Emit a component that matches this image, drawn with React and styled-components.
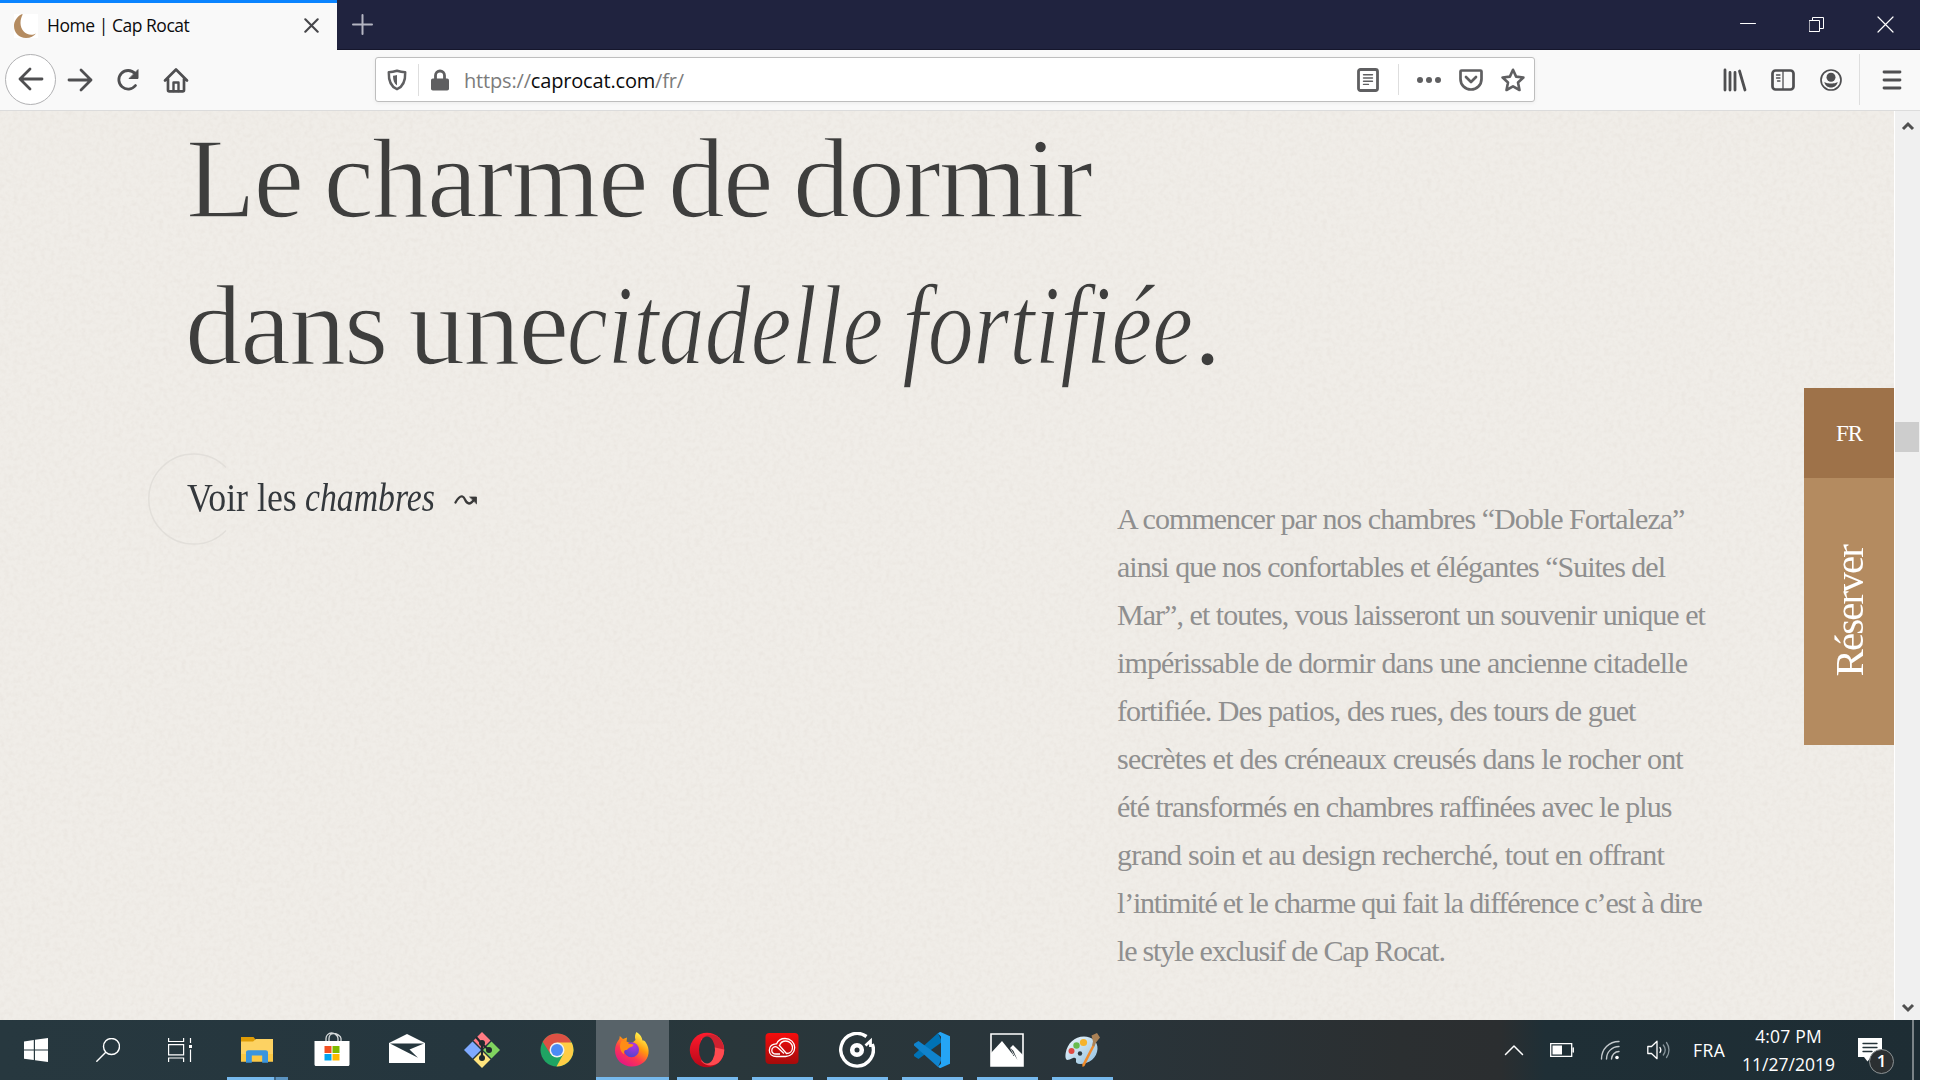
import React, { useLayoutEffect, useRef, useState } from "react";
import styled, { createGlobalStyle } from "styled-components";

const Global = createGlobalStyle`
  *, *::before, *::after { box-sizing: border-box; }
  html, body { margin: 0; padding: 0; background: #fff; }
  h1, p { margin: 0; font-weight: 400; }
  svg { display: block; flex: none; }
`;

const serif = `"Liberation Serif", serif`;
const sans = `"Open Sans", "Noto Sans", sans-serif`;

/* ---------- text set to an exact measure ---------- */

const FitBox = styled.span`
  display: inline-block;
  white-space: pre;
  transform-origin: 0 50%;
  font-variant-ligatures: none;
`;

function Fit({ width, condense, children, ...rest }) {
  const ref = useRef(null);
  const [style, setStyle] = useState({});
  useLayoutEffect(() => {
    const natural = ref.current.offsetWidth;
    const letters = ref.current.textContent.length;
    setStyle(
      condense
        ? { width, transform: `scaleX(${width / natural})` }
        : { letterSpacing: `${(width - natural) / (letters - 1)}px` }
    );
  }, [width, condense]);
  return (
    <FitBox ref={ref} style={style} {...rest}>
      {children}
    </FitBox>
  );
}

/* ---------- window ---------- */

const Screen = styled.div`
  width: 1920px;
  height: 1080px;
  display: flex;
  flex-direction: column;
  overflow: hidden;
  background: #eeebe6;
`;

const TabBar = styled.header`
  display: flex;
  height: 50px;
  flex: none;
  background: #20233f;
  box-shadow: inset 0 -1px 0 #15162c;
`;

const Tab = styled.div`
  display: flex;
  align-items: center;
  width: 337px;
  padding: 0 18px 2px 14px;
  border-top: 3px solid #0a84ff;
  background: #f9f9f9;
`;

const TabTitle = styled.div`
  flex: 1;
  margin: -1px 0 0 9px;
  font: 17.5px/24px ${sans};
  color: #0c0c0d;
`;

const NewTab = styled.div`
  display: flex;
  align-items: center;
  padding: 0 0 2px 15px;
  flex: 1;
`;

const WindowControls = styled.div`
  display: flex;
  align-items: center;
  padding-bottom: 2px;
`;

const WindowButton = styled.div`
  display: flex;
  justify-content: center;
  width: 69px;
`;

const Toolbar = styled.nav`
  display: flex;
  align-items: center;
  height: 61px;
  flex: none;
  padding: 0 4px 2px 5px;
  background: #f9f9f9;
  border-bottom: 1px solid #dcdcdc;
`;

const NavGroup = styled.div`
  display: flex;
  align-items: center;
  width: 370px;
`;

const NavButton = styled.div`
  display: flex;
  align-items: center;
  justify-content: center;
  width: ${(p) => p.$w || 48}px;
  height: 51px;
  padding-top: 1px;
`;

const BackButton = styled(NavButton)`
  padding-top: 0;
  border: 1px solid #b1b1b3;
  border-radius: 50%;
  background: #fff;
`;

const UrlBar = styled.div`
  display: flex;
  align-items: center;
  width: 1160px;
  height: 45px;
  padding: 1px 0 0 11px;
  background: #fff;
  border: 1px solid #bebebe;
  border-radius: 3px;
  box-shadow: 0 1px 4px rgba(0, 0, 0, 0.06);
`;

const Rule = styled.i`
  width: 1px;
  height: ${(p) => p.$h}px;
  margin: ${(p) => p.$m};
  background: #dedede;
`;

const Url = styled.div`
  flex: 1;
  margin-left: 15px;
  padding-top: 2px;
  font: 20px/30px ${sans};
  color: #7c7c7c;
  b {
    font-weight: 400;
    color: #0c0c0d;
  }
`;

const UrlAction = styled.div`
  display: flex;
  justify-content: center;
  width: 42px;
  padding-top: 1px;
`;

const RightGroup = styled.div`
  display: flex;
  align-items: center;
  margin-left: auto;
`;

/* ---------- page ---------- */

const Viewport = styled.div`
  display: flex;
  flex: 1;
  min-height: 0;
`;

const Page = styled.main`
  position: relative;
  z-index: 0;
  display: flex;
  justify-content: space-between;
  flex: 1;
  overflow: hidden;
  background: #eeebe6;
  font-family: ${serif};
`;

const Paper = styled.svg`
  position: absolute;
  inset: 0;
  z-index: -1;
`;

const Article = styled.section`
  display: grid;
  grid-template-columns: 928px 600px;
  grid-template-rows: 294px auto;
  align-content: start;
  margin: -6px 0 0 189px;
`;

const Heading = styled.h1`
  grid-column: 1 / 3;
  font-size: 114px;
  line-height: 147px;
  word-spacing: -5px;
  color: #3e3e3d;
  -webkit-text-stroke: 1.6px #eeebe6;
`;

const HeadingLine = styled.div`
  display: flex;
  margin-left: ${(p) => p.$shift || 0}px;
`;

const RoomsLink = styled.a`
  position: relative;
  display: flex;
  align-items: center;
  height: 92px;
  margin-top: 52px;
  font-size: 41px;
  line-height: 92px;
  color: #34383c;
`;

const Ring = styled.svg`
  position: absolute;
  left: -41px;
  top: 2px;
  z-index: -1;
`;

const Word = styled.span`
  display: block;
  margin-left: ${(p) => p.$gap}px;
  font-style: ${(p) => (p.$italic ? "italic" : "normal")};
`;

const Arrow = styled.span`
  margin: 5px 0 0 19px;
`;

const Body = styled.p`
  margin-top: 96px;
  font-size: 30px;
  line-height: 48px;
  color: #8f8f8f;
`;

const BodyLine = styled.span`
  display: block;
  height: 48px;
`;

const Side = styled.aside`
  width: 90px;
  margin-top: 277px;
  color: #fff;
`;

const Language = styled.div`
  display: flex;
  align-items: center;
  justify-content: center;
  height: 90px;
  padding-top: 2px;
  background: #9e7249;
  font-size: 23px;
  line-height: 30px;
`;

const Book = styled.div`
  display: flex;
  align-items: center;
  justify-content: center;
  height: 267px;
  background: #b48b60;
  font-size: 41px;
  line-height: 60px;
  span {
    writing-mode: vertical-rl;
    transform: rotate(180deg);
    letter-spacing: -1.9px;
  }
`;

const Scrollbar = styled.div`
  display: flex;
  flex-direction: column;
  align-items: center;
  width: 26px;
  padding: 9px 0 6px;
  background: #f0f0f0;
  border-left: 1px solid #fff;
`;

const Thumb = styled.div`
  width: 24px;
  height: 30px;
  margin: 291px 1px auto 0;
  background: #cdcdcd;
`;

/* ---------- taskbar ---------- */

const Taskbar = styled.footer`
  display: flex;
  height: 60px;
  flex: none;
  background: linear-gradient(90deg, #27383f 0, #25363e 480px, #29373b 720px, #29343a 1100px, #2b2f31 1400px, #2b2e30 1500px, #1f2f36 1545px, #1e2d34 1920px);
  font-family: ${sans};
  color: #fff;
`;

const SystemButton = styled.div`
  display: flex;
  align-items: center;
  justify-content: center;
  width: 72px;
`;

const Apps = styled.div`
  display: flex;
  margin-left: 4px;
`;

const AppSlot = styled.div`
  display: flex;
  flex-direction: column;
  align-items: center;
  width: ${(p) => (p.$active ? 73 : 75)}px;
  margin: 0 ${(p) => (p.$active ? 1 : 0)}px;
  background: ${(p) => (p.$active ? "#586369" : "transparent")};
  svg {
    margin: 12px 2px 9px 0;
  }
`;

const Running = styled.i`
  width: ${(p) => (p.$active ? 73 : 61)}px;
  height: 3px;
  background: ${(p) =>
    p.$stacked ? "linear-gradient(90deg, #76b9ed 47px, #3e6585 47px, #3e6585 49px, #5b93c0 49px)" : "#76b9ed"};
`;

const Tray = styled.div`
  display: flex;
  align-items: center;
  margin-left: auto;
  padding-right: 6px;
`;

const TrayItem = styled.div`
  display: flex;
  justify-content: center;
  width: 48px;
`;

const Keyboard = styled.div`
  margin: 0 19px 0 11px;
  width: 31px;
  font-size: 17.5px;
  line-height: 24px;
`;

const Clock = styled.div`
  display: flex;
  flex-direction: column;
  align-items: center;
  width: 91px;
  font-size: 17.5px;
  line-height: 28px;
`;

const Notice = styled.div`
  position: relative;
  margin: 0 30px 1px 24px;
`;

const Badge = styled.div`
  position: absolute;
  left: 11px;
  top: 11px;
  width: 25px;
  height: 25px;
  border: 1px solid #8c9294;
  border-radius: 50%;
  background: #2b2f31;
  font: 600 17px/22px ${sans};
  text-align: center;
`;

const ShowDesktop = styled.i`
  width: 2px;
  height: 60px;
  background: #7b8387;
`;

/* ---------- drawings ---------- */

const Icon = ({ s = 24, w = s, h = s, c = "#4f4f51", sw = 2.4, vb, children }) => (
  <svg width={w} height={h} viewBox={vb || `0 0 ${w} ${h}`} fill="none" stroke={c} strokeWidth={sw} strokeLinecap="round" strokeLinejoin="round">
    {children}
  </svg>
);

const Moon = () => (
  <Icon sw={0} c="none">
    <path fill="#fff" d="M0 0h24v24H0z" />
    <path fill="#b48b60" d="M7.5.2C2.600 3 0 7.200 0 12c0 6.800 5 12 12 12 4.500 0 8-1.900 10-4.500-1.600.9-3.200 1.200-4.600 1.200C11 20.700 6.500 15.500 6.500 9c0-3.400.9-6.100 2.300-8.800z" />
  </Icon>
);
const CloseTab = () => (
  <Icon s={15} c="#46464a" sw={2.1}><path d="M1.300 1.300l12.400 12.400M13.700 1.300L1.300 13.700" /></Icon>
);
const Plus = () => (
  <Icon s={21} c="#b4b5c2" sw={2}><path d="M10.500 1v19M1 10.500h19" /></Icon>
);
const Back = () => (
  <Icon s={26} sw={2.8}><path d="M2 13h22M12 3L2 13l10 10" /></Icon>
);
const Forward = () => (
  <Icon s={26} sw={2.8}><path d="M2 13h22M14 3l10 10-10 10" /></Icon>
);
const Reload = () => (
  <Icon s={26} sw={2.8}>
    <path d="M20.500 18.500A9.300 9.300 0 1 1 20 6.500" />
    <path d="M23 3v8.500h-8.500z" fill="#4f4f51" strokeWidth="1" />
  </Icon>
);
const Home = () => (
  <Icon s={26} sw={2.7}>
    <path d="M2 13.500L13 2.500l11 11M5 12v11c0 .8.500 1.300 1.300 1.300h13.400c.8 0 1.300-.5 1.300-1.300V12" />
    <path d="M10.500 24v-8.500h5V24" strokeWidth="2.400" />
  </Icon>
);
const Shield = () => (
  <Icon w={20} h={22} c="#5f5f61" sw={2.5}>
    <path d="M10 1.800C7 2.800 4.500 3.200 1.800 3.200c-.3 8.300 1.700 14.300 8.200 17 6.500-2.700 8.500-8.700 8.200-17C15.500 3.200 13 2.800 10 1.800z" />
    <path d="M10 6c-1.300.4-2.500.6-4 .7.100 4.500 1 7.700 4 9.700z" fill="#5f5f61" stroke="none" />
  </Icon>
);
const Lock = () => (
  <Icon w={18} h={22} c="#5f5f61" sw={2.8}>
    <path d="M4.500 10V6.500a4.500 4.500 0 0 1 9 0V10" />
    <rect x="0" y="9.500" width="18" height="12" rx="1.800" fill="#5f5f61" stroke="none" />
  </Icon>
);
const Reader = () => (
  <Icon w={22} h={24} c="#5f5f61" sw={2.8}>
    <rect x="1.500" y="1.500" width="19" height="21" rx="2" />
    <path strokeWidth="1.400" d="M6.500 6.800h9M6.500 10h9M6.500 13.200h9M6.500 16.400h5" />
  </Icon>
);
const Dots = () => (
  <Icon w={24} h={8} sw={0}><g fill="#5f5f61"><circle cx="3" cy="4" r="3" /><circle cx="12" cy="4" r="3" /><circle cx="21" cy="4" r="3" /></g></Icon>
);
const Pocket = () => (
  <Icon w={24} h={22} c="#5f5f61" sw={2.7}>
    <path d="M2.500 1.500h19c.6 0 1 .4 1 1V10c0 6-4.700 10.500-10.500 10.500S1.500 16 1.500 10V2.500c0-.6.400-1 1-1z" /><path d="M7 8l5 5 5-5" />
  </Icon>
);
const Star = () => (
  <Icon s={24} c="#5f5f61" sw={2.6}>
    <path d="M12 1.800l3.100 6.800 7.300.9-5.400 5 1.500 7.500L12 18.300 5.500 22 7 14.500l-5.400-5 7.300-.9z" />
  </Icon>
);
const Library = () => (
  <Icon s={24} sw={2.8}><path d="M2 2v20M7 4.500V22M12 4.500V22M16.500 3l5.500 19" /></Icon>
);
const Sidebar = () => (
  <Icon w={24} h={22} sw={2.7}>
    <rect x="1.500" y="1.500" width="21" height="19" rx="3" />
    <path strokeWidth="1.300" d="M12 2v18M5.500 6h3.500M5.500 9h3.500M6.500 12h2.500" />
  </Icon>
);
const Account = () => (
  <Icon s={22} sw={1.7}>
    <circle cx="11" cy="11" r="10" />
    <g fill="#4f4f51" stroke="none"><circle cx="11" cy="8.300" r="4.500" /><path d="M4.300 13c1.500.5 2.500 1.500 6.700 1.500s5.200-1 6.700-1.500c-.7 3.300-3.300 5.500-6.700 5.500S5 16.300 4.300 13z" /></g>
  </Icon>
);
const Menu = () => (
  <Icon w={20} h={20} sw={2.8}><path d="M2 2h16M2 10h16M2 18h16" /></Icon>
);
const Minimize = () => <Icon s={16} c="#fff" sw={1}><path d="M.5 7.500h15" /></Icon>;
const Restore = () => (
  <Icon s={15} c="#fff" sw={1}><path strokeLinejoin="miter" d="M.5 3.500h10v11H.5zM3.500 3.500v-3h11v11h-4" /></Icon>
);
const CloseWindow = () => <Icon s={17} c="#fff" sw={1.2}><path d="M1 1l15 15M16 1L1 16" /></Icon>;
const Squiggle = () => (
  <Icon w={24} h={12} c="#3a3a3a" sw={2.3}>
    <path d="M1.500 8.500C4 4 6.500 1.800 8.500 2.500 11.500 3.500 11 9.500 15 9.500c2.500 0 4.500-3 6-5" />
    <path d="M16 3h6.500v6.500z" fill="#3a3a3a" strokeWidth=".8" />
  </Icon>
);
const Chevron = ({ down }) => (
  <Icon w={14} h={11} c="#505050" sw={3}><path strokeLinecap="butt" strokeLinejoin="miter" d={down ? "M2 2l5 5 5-5" : "M2 9l5-5 5 5"} /></Icon>
);

const Windows = () => (
  <Icon sw={0}><path fill="#fff" d="M0 3.400L9.800 2v9.500H0zM11 1.800L24 0v11.500H11zM0 12.600h9.800V22L0 20.700zM11 12.600h13V24l-13-1.800z" /></Icon>
);
const Search = () => (
  <Icon c="#fff" sw={1.4}><circle cx="15.500" cy="8.500" r="8" /><path d="M9.500 14.500L.8 23.300" /></Icon>
);
const TaskView = () => (
  <Icon c="#fff" sw={1.2}>
    <path strokeLinejoin="miter" strokeLinecap="butt" d="M.6 0v3.500h15V0M.6 6.600h15v10.300H.6zM.6 24v-4h15v4M22.500 0v5M22.500 11.500V24" />
    <path d="M21 7h3v3h-3z" fill="#fff" stroke="none" />
  </Icon>
);

const AppIcon = ({ children }) => (
  <svg width="36" height="36" viewBox="0 0 36 36" fill="none">{children}</svg>
);
const Explorer = () => (
  <AppIcon>
    <path d="M2 5h12.500l2.500 3v5H2z" fill="#df9c06" />
    <path d="M2 9.500h12L17 7h17v22.500H2z" fill="#fdd262" />
    <path d="M2 22h32v7.500H2z" fill="#fcc944" />
    <path d="M7 30.800V20.500c0-1.400 1-2.300 2.400-2.300h17.200c1.400 0 2.400.9 2.400 2.300v10.300h-5.800v-7.200H12.800v7.200z" fill="#3a95de" />
  </AppIcon>
);
const Store = () => (
  <AppIcon>
    <path d="M12 10V6.500C12 3.500 14.500 1 17.500 1S24 3.500 24 6.500V10M15 10V6.500C15 3.500 17 1.500 19.500 1.500S27 3.500 27 6.500V10" stroke="#d5d9da" strokeWidth="1.300" />
    <path d="M.5 9h35v23.500c0 .8-.6 1.500-1.500 1.500H2c-.9 0-1.500-.7-1.500-1.500z" fill="#fff" />
    <path d="M10.500 14h7v7h-7z" fill="#f25022" /><path d="M18.500 14h7v7h-7z" fill="#7fba00" />
    <path d="M10.500 22h7v6.500h-7z" fill="#00a4ef" /><path d="M18.500 22h7v6.500h-7z" fill="#ffb900" />
  </AppIcon>
);
const Mail = () => (
  <AppIcon>
    <path d="M0 11L18 2l18 9v20H0z" fill="#fff" /><path d="M1 11.500h34L20.500 17.500l8.500 8.200z" fill="#26373e" />
  </AppIcon>
);
const GitApp = () => (
  <AppIcon>
    <path d="M18 0l8.500 8.500L18 17 9.500 8.500z" fill="#ff7b84" /><path d="M27.500 9.500L36 18l-8.500 8.500L19 18z" fill="#80d45f" />
    <path d="M18 19l8.500 8.500L18 36l-8.500-8.500z" fill="#ffe47e" /><path d="M8.500 9.500L17 18l-8.500 8.500L0 18z" fill="#7faaff" />
    <g stroke="#20292e" strokeWidth="2.200"><path d="M12 5l6 7v15M18 12l7 6" /></g>
    <g fill="#20292e"><circle cx="18" cy="11" r="3" /><circle cx="25" cy="18" r="3" /><circle cx="18" cy="26" r="3" /></g>
  </AppIcon>
);
const Chrome = () => (
  <AppIcon>
    <circle cx="18" cy="18" r="16.500" fill="#1fa463" />
    <path d="M18 18L3.700 9.750A16.500 16.500 0 0 1 32.300 9.750z" fill="#dd5144" />
    <path d="M18 10.500h14.700A16.500 16.500 0 0 1 17.500 34.500L24.500 21.750z" fill="#ffcd46" />
    <path d="M3.700 9.750L11.500 22 18 10.500z" fill="#dd5144" />
    <circle cx="18" cy="18" r="7.500" fill="#f1f1f1" /><circle cx="18" cy="18" r="6" fill="#4b8bf5" />
  </AppIcon>
);
const Firefox = () => (
  <AppIcon>
    <defs>
      <linearGradient id="ffa" x1="28" y1="3" x2="8" y2="33" gradientUnits="userSpaceOnUse"><stop stopColor="#fff44f" /><stop offset=".35" stopColor="#ff980e" /><stop offset=".65" stopColor="#ff3750" /><stop offset="1" stopColor="#e31587" /></linearGradient>
      <radialGradient id="ffb" cx=".65" cy=".2" r=".9"><stop stopColor="#b833e1" /><stop offset="1" stopColor="#4a45c9" /></radialGradient>
    </defs>
    <path d="M22.500 0c4 2.500 5.500 5.500 6 8.500 1.500-.2 2.500.5 3 1.500 2.500 3.500 3.500 7.500 3 11.500C33.500 29 26.800 34.500 18 34.500 8.300 34.500 1 27.600 1 18.500 1 14 2.700 10 5.300 7l.5-3 3.200 3 4-1.500-.5 4 5 2 4-3.500c-1-3-.5-6 1-8z" fill="url(#ffa)" />
    <circle cx="17.500" cy="17.800" r="7.500" fill="url(#ffb)" />
    <path d="M7 9.500c3-1 5.500 0 7.500 2 1.700.7 3.800.5 5 1.200-.5 1.900-2.600 2.300-4.300 3-1.500.7-1.300 2.300-3.300 2.200-2-.1-2.600 2.200-1.600 4.500C6 20 5 14 7 9.500z" fill="#ff8c16" />
  </AppIcon>
);
const Opera = () => (
  <AppIcon>
    <defs><linearGradient id="op" x1="0" y1="0" x2="0" y2="1"><stop stopColor="#ff1b2d" /><stop offset="1" stopColor="#b80718" /></linearGradient></defs>
    <circle cx="18" cy="18" r="17.200" fill="url(#op)" />
    <path d="M12.500 6.500C17 1.500 24 1.500 29.500 5.200A17.200 17.200 0 0 1 29.500 30.800C24 34.500 17 34.500 12.500 29.500z" fill="#ff4a50" />
    <path d="M12.500 6.500C17 1.500 24 1.500 29.500 5.200 33 8.500 35 13 35 17.500l-9-2z" fill="#a70014" opacity=".55" />
    <ellipse cx="18" cy="18" rx="8" ry="13.500" fill="#28363b" />
  </AppIcon>
);
const Cloud = () => (
  <AppIcon>
    <defs><linearGradient id="cc" x1="0" y1="0" x2="0" y2="1"><stop stopColor="#f60d0d" /><stop offset="1" stopColor="#a50b0b" /></linearGradient></defs>
    <rect x="1.500" y="1" width="33" height="31" rx="4" fill="url(#cc)" />
    <g stroke="#fff" strokeWidth="1.300">
      <path d="M12.500 24.500c-4.500 0-7.200-2.800-7.200-6.300 0-3.700 2.900-6.500 7.200-6.300C14 8.500 17.500 6.500 21 6.500c5.500 0 9.700 4 9.700 9s-4 9-9 9z" />
      <path d="M20 21.500l-6.500-6c-3-2-5.700.3-5.700 2.700 0 2.300 1.700 3.800 4.200 3.800h4M15 13l7.500 8.500c3.500 0 6-2.500 6-6s-3-6.500-6.800-6.500c-3 0-5 1.500-6 4" />
    </g>
  </AppIcon>
);
const Groove = () => (
  <AppIcon>
    <path d="M27.500 4.500A16.300 16.300 0 1 0 33.300 12" stroke="#fff" strokeWidth="3.400" />
    <circle cx="18" cy="18" r="4.800" stroke="#fff" strokeWidth="4.600" />
    <path d="M26.500 13.500l5-4.500v6" stroke="#fff" strokeWidth="2.800" />
  </AppIcon>
);
const Code = () => (
  <AppIcon>
    <path d="M0 22.500L24 1l4 9L4.500 27l-4-2.600c-.8-.6-.8-1.300-.5-1.900z" fill="#0072b5" />
    <path d="M0 13.500L24 35l4-9L4.500 9l-4 2.500c-.8.700-.8 1.400-.5 2z" fill="#1083cd" />
    <path d="M26.500 0L36 4.300v27.400L26.500 36c-1 0-1.500-.5-2.500-1.300l3-3V4.500l-3-3C25 .5 25.500 0 26.500 0z" fill="#25a5f5" />
  </AppIcon>
);
const Photos = () => (
  <AppIcon>
    <path d="M2 2h32v32H2z" stroke="#fff" strokeWidth="1.600" />
    <path d="M2 21L13 9l12 15-4-8 3-3 10 10v11H2z" fill="#fff" /><path d="M21 15.500L28.500 28 24.500 19z" fill="#29343a" />
  </AppIcon>
);
const Paint = () => (
  <AppIcon>
    <defs><linearGradient id="pa" x1="0" y1="0" x2="1" y2="1"><stop stopColor="#eef7fc" /><stop offset="1" stopColor="#92c0df" /></linearGradient></defs>
    <path d="M20 4.500c8 0 14 5 13.500 12.500C33 25.500 25.500 32 16 32c-3 0-4.500-1.500-4-3.500.6-2.400-1-3.500-3-2.500-2.500 1.300-4.500 2-5.500 2-1.800 0-2.500-3-1.800-7C3.300 11.500 10.500 4.500 20 4.500z" fill="url(#pa)" />
    <circle cx="7.500" cy="19" r="3" fill="#e04a43" /><circle cx="12.500" cy="13.500" r="3.200" fill="#68bb4e" /><circle cx="19.500" cy="10.500" r="3.600" fill="#f6b32c" /><circle cx="16" cy="21.500" r="2.200" fill="#2b3a42" />
    <path d="M28.500 13l2 1.300L20.500 34l-2 1-.2-2.500z" fill="#ef8b2c" /><path d="M28 13.500l1-4-1.500-6L33 1l3 4.500-4 5-1.500 4z" fill="#a98156" />
  </AppIcon>
);

const TrayUp = () => <Icon w={20} h={12} c="#fff" sw={1.5}><path d="M1.500 10.500L10 2l8.500 8.500" /></Icon>;
const Battery = () => (
  <Icon w={24} h={14} c="#fff" sw={1.3}><path strokeLinejoin="miter" d="M.7.7h21v12.600H.7zM23.300 5v4" /><path d="M2.500 2.500h9.500v9H2.500z" fill="#fff" stroke="none" /></Icon>
);
const Wifi = () => (
  <Icon s={20} c="#c3c9cc" sw={1.4}>
    <path d="M1.500 19C1.500 9 9 1.500 19 1.500M6.500 19C6.500 12 12 6.500 19 6.500M11.500 19c0-4 3.500-7.500 7.500-7.500" /><circle cx="17" cy="17.500" r="1.800" fill="#fff" stroke="none" />
  </Icon>
);
const Volume = () => (
  <Icon w={23} h={20} c="#fff" sw={1.3}>
    <path d="M.8 6.500h3.700L10 1.300v17.400l-5.500-5.200H.8z" /><path d="M13 7.500c1 1.500 1 3.500 0 5" /><path stroke="#87949a" d="M16.300 5c2.300 3 2.300 7 0 10M19.500 2.500c3.300 4.500 3.300 10.500 0 15" />
  </Icon>
);
const Message = () => (
  <Icon w={24} h={24} sw={0}><path fill="#fff" d="M0 0h24v19H13l-3.500 4.500L6 19H0z" /><path stroke="#26343a" strokeWidth="1.300" d="M5 5.500h14M5 9.500h14M5 13.500h9" /></Icon>
);

/* ---------- content ---------- */

const bodyLines = [
  ["A commencer par nos chambres “Doble Fortaleza”", 568],
  ["ainsi que nos confortables et élégantes “Suites del", 549],
  ["Mar”, et toutes, vous laisseront un souvenir unique et", 589],
  ["impérissable de dormir dans une ancienne citadelle", 571],
  ["fortifiée. Des patios, des rues, des tours de guet", 519],
  ["secrètes et des créneaux creusés dans le rocher ont", 567],
  ["été transformés en chambres raffinées avec le plus", 555],
  ["grand soin et au design recherché, tout en offrant", 548],
  ["l’intimité et le charme qui fait la différence c’est à dire", 586],
  ["le style exclusif de Cap Rocat.", 329],
];

const apps = [
  { Draw: Explorer, running: true, stacked: true },
  { Draw: Store },
  { Draw: Mail },
  { Draw: GitApp },
  { Draw: Chrome },
  { Draw: Firefox, running: true, active: true },
  { Draw: Opera, running: true },
  { Draw: Cloud, running: true },
  { Draw: Groove, running: true },
  { Draw: Code, running: true },
  { Draw: Photos, running: true },
  { Draw: Paint, running: true },
];

export default function App() {
  return (
    <>
      <Global />
      <Screen>
        <TabBar>
          <Tab>
            <Moon />
            <TabTitle><Fit width={143}>Home | Cap Rocat</Fit></TabTitle>
            <CloseTab />
          </Tab>
          <NewTab><Plus /></NewTab>
          <WindowControls>
            <WindowButton><Minimize /></WindowButton>
            <WindowButton><Restore /></WindowButton>
            <WindowButton><CloseWindow /></WindowButton>
          </WindowControls>
        </TabBar>

        <Toolbar>
          <NavGroup>
            <BackButton $w={51}><Back /></BackButton>
            <NavButton><Forward /></NavButton>
            <NavButton><Reload /></NavButton>
            <NavButton><Home /></NavButton>
          </NavGroup>
          <UrlBar>
            <Shield />
            <Rule $h={32} $m="0 12px 0 11px" />
            <Lock />
            <Url>
              <Fit width={220}>https://<b>caprocat.com</b>/fr/</Fit>
            </Url>
            <UrlAction><Reader /></UrlAction>
            <Rule $h={31} $m="0 9px" />
            <UrlAction><Dots /></UrlAction>
            <UrlAction><Pocket /></UrlAction>
            <UrlAction><Star /></UrlAction>
          </UrlBar>
          <RightGroup>
            <NavButton><Library /></NavButton>
            <NavButton><Sidebar /></NavButton>
            <NavButton><Account /></NavButton>
            <Rule $h={51} $m="0 8px 0 4px" />
            <NavButton><Menu /></NavButton>
          </RightGroup>
        </Toolbar>

        <Viewport>
          <Page>
            <Paper width="1894" height="909">
              <filter id="grain" x="0" y="0" width="100%" height="100%">
                <feTurbulence type="fractalNoise" baseFrequency="0.22" numOctaves="3" seed="4" />
                <feColorMatrix values="0 0 0 0 0.74  0 0 0 0 0.69  0 0 0 0 0.64  0.5 0.3 0 0 -0.33" />
              </filter>
              <rect width="100%" height="100%" fill="#f0ede8" />
              <rect width="100%" height="100%" filter="url(#grain)" />
            </Paper>
            <Article>
              <Heading>
                <HeadingLine $shift={-3}><Fit width={907}>Le charme de dormir</Fit></HeadingLine>
                <HeadingLine $shift={-4}>
                  <Fit width={384}>dans une</Fit>
                  <em><Fit condense width={626}>citadelle fortifiée</Fit></em>
                  <span>.</span>
                </HeadingLine>
              </Heading>
              <RoomsLink>
                <Ring width="92" height="92" fill="none">
                  <path d="M78 14.600A45 45 0 1 0 78 77.400" stroke="#e2dfda" strokeWidth="1.500" />
                </Ring>
                <Word $gap={-2}><Fit condense width={110}>Voir les</Fit></Word>
                <Word $gap={8} $italic><Fit condense width={130}>chambres</Fit></Word>
                <Arrow><Squiggle /></Arrow>
              </RoomsLink>
              <Body>
                {bodyLines.map(([text, width]) => (
                  <BodyLine key={text}><Fit width={width}>{text}</Fit></BodyLine>
                ))}
              </Body>
            </Article>
            <Side>
              <Language><Fit width={27}>FR</Fit></Language>
              <Book><span>Réserver</span></Book>
            </Side>
          </Page>
          <Scrollbar>
            <Chevron />
            <Thumb />
            <Chevron down />
          </Scrollbar>
        </Viewport>

        <Taskbar>
          <SystemButton><Windows /></SystemButton>
          <SystemButton><Search /></SystemButton>
          <SystemButton><TaskView /></SystemButton>
          <Apps>
            {apps.map(({ Draw, running, active, stacked }, i) => (
              <AppSlot key={i} $active={active}>
                <Draw />
                {running && <Running $active={active} $stacked={stacked} />}
              </AppSlot>
            ))}
          </Apps>
          <Tray>
            <TrayItem><TrayUp /></TrayItem>
            <TrayItem><Battery /></TrayItem>
            <TrayItem><Wifi /></TrayItem>
            <TrayItem><Volume /></TrayItem>
            <Keyboard><Fit width={32}>FRA</Fit></Keyboard>
            <Clock>
              <Fit width={66}>4:07 PM</Fit>
              <Fit width={93}>11/27/2019</Fit>
            </Clock>
            <Notice>
              <Message />
              <Badge>1</Badge>
            </Notice>
            <ShowDesktop />
          </Tray>
        </Taskbar>
      </Screen>
    </>
  );
}
